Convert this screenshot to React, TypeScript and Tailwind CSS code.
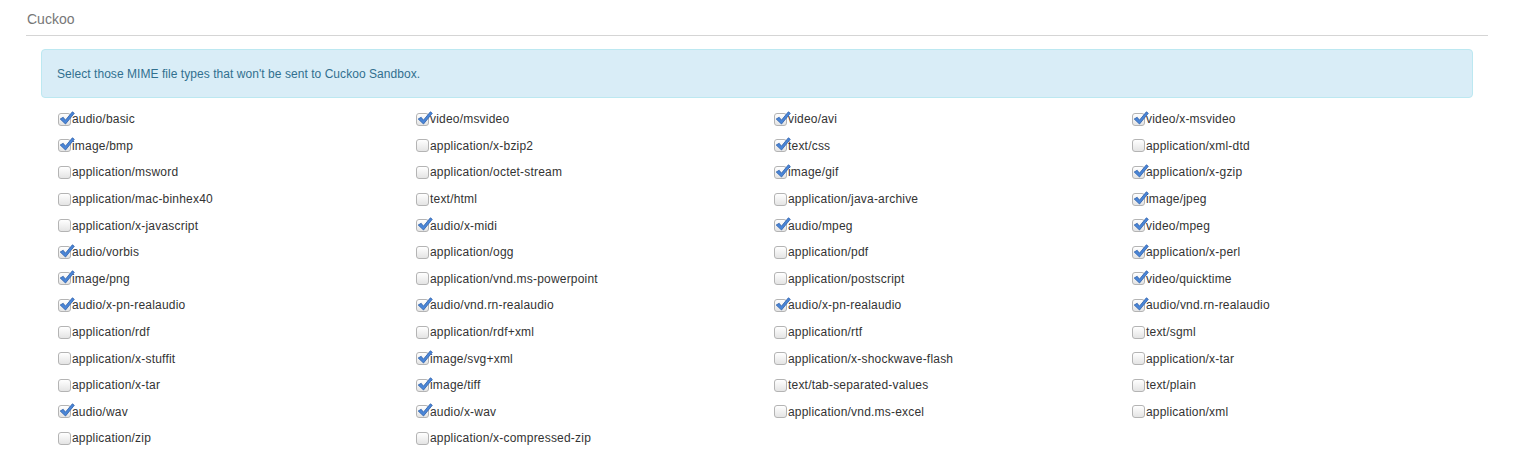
import React from "react";

type Mime = { name: string; checked: boolean };

const rows: [string, boolean][][] = [
  [["audio/basic", true], ["video/msvideo", true], ["video/avi", true], ["video/x-msvideo", true]],
  [["image/bmp", true], ["application/x-bzip2", false], ["text/css", true], ["application/xml-dtd", false]],
  [["application/msword", false], ["application/octet-stream", false], ["image/gif", true], ["application/x-gzip", true]],
  [["application/mac-binhex40", false], ["text/html", false], ["application/java-archive", false], ["image/jpeg", true]],
  [["application/x-javascript", false], ["audio/x-midi", true], ["audio/mpeg", true], ["video/mpeg", true]],
  [["audio/vorbis", true], ["application/ogg", false], ["application/pdf", false], ["application/x-perl", true]],
  [["image/png", true], ["application/vnd.ms-powerpoint", false], ["application/postscript", false], ["video/quicktime", true]],
  [["audio/x-pn-realaudio", true], ["audio/vnd.rn-realaudio", true], ["audio/x-pn-realaudio", true], ["audio/vnd.rn-realaudio", true]],
  [["application/rdf", false], ["application/rdf+xml", false], ["application/rtf", false], ["text/sgml", false]],
  [["application/x-stuffit", false], ["image/svg+xml", true], ["application/x-shockwave-flash", false], ["application/x-tar", false]],
  [["application/x-tar", false], ["image/tiff", true], ["text/tab-separated-values", false], ["text/plain", false]],
  [["audio/wav", true], ["audio/x-wav", true], ["application/vnd.ms-excel", false], ["application/xml", false]],
  [["application/zip", false], ["application/x-compressed-zip", false]],
];

const mimes: Mime[] = rows.flat().map(([name, checked]) => ({ name, checked }));

function Box({ checked }: { checked: boolean }) {
  return (
    <span className="relative inline-block w-[13px] h-[13px] shrink-0 rounded-[3px] border border-[#b4b4b4] bg-gradient-to-b from-white to-[#e4e4e4]">
      {checked && (
        <svg viewBox="0 0 16 14" className="absolute left-[0px] top-[-3px] w-[16px] h-[14px]">
          <path
            d="M1.2 8 L4.2 6.3 L6.4 9.2 L13.4 0.8 L15.3 2.3 L6.5 13 Z"
            fill="#4a86d8"
            stroke="#2c5ea8"
            strokeWidth="0.8"
            strokeLinejoin="round"
          />
        </svg>
      )}
    </span>
  );
}

export default function App() {
  return (
    <div className="bg-white min-h-screen pl-[26px] pr-[29px] pt-[9px] font-['Liberation_Sans',Arial,sans-serif]">
      <div className="text-[14px] text-[#777] leading-[20px] pl-[1px] pb-[6px] border-b border-[#d5d5d5]">Cuckoo</div>

      <div className="px-[15px]">
        <div className="mt-[13px] h-[49px] flex items-center px-[15px] rounded-[4px] border border-[#bce8f1] bg-[#d9edf7] text-[#31708f] text-[12px] tracking-[0.05px]">
          Select those MIME file types that won't be sent to Cuckoo Sandbox.
        </div>

        <ul className="mt-[8px] grid grid-cols-4">
          {mimes.map((m, i) => (
            <li key={i} className="h-[26.6px] flex items-center pl-[17px] text-[12px] text-[#333] tracking-[0.2px]">
              <label className="flex items-center">
                <Box checked={m.checked} />
                <span className="ml-[1px]">{m.name}</span>
              </label>
            </li>
          ))}
        </ul>
      </div>
    </div>
  );
}
